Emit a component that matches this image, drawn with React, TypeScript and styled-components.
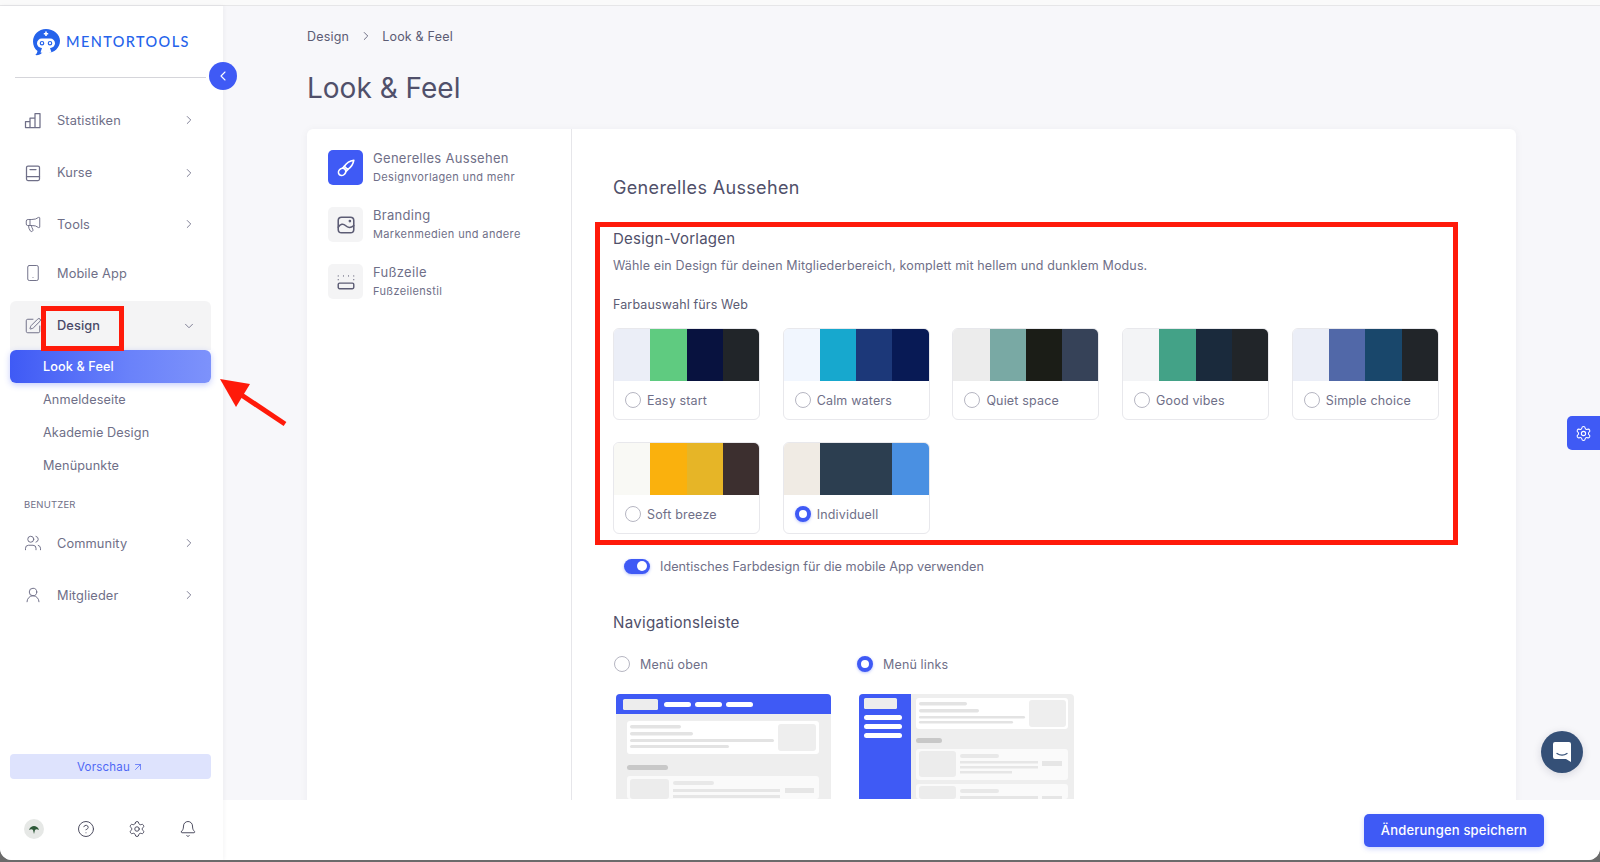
import React from "react";
import styled, { createGlobalStyle } from "styled-components";
import {
  Megaphone, Smartphone, SquarePen, ChevronRight, ChevronDown, ChevronLeft,
  Users, UserRound, HelpCircle, Settings, Bell, ArrowUpRight,
} from "lucide-react";

const Global = createGlobalStyle`
  html, body { margin: 0; padding: 0; height: 100%; background: #fff; }
  body { font-family: "Inter", "Liberation Sans", sans-serif; overflow: hidden; }
  * { box-sizing: border-box; }
`;

const Page = styled.div`
  width: 1600px; height: 862px; background: #6b6b6b; overflow: hidden; position: relative;
`;
const Shell = styled.div`
  height: 860px; background: #fff; border-radius: 0 0 12px 12px; overflow: hidden;
  display: flex; flex-direction: column;
`;
const TopStrip = styled.div`
  height: 6px; flex: none; background: #fafafa; border-bottom: 1px solid #e6e6e8;
`;
const Body = styled.div`
  flex: 1; display: flex; min-height: 0; position: relative;
`;
const Sidebar = styled.aside`
  width: 223px; flex: none; background: #fff; display: flex; flex-direction: column;
  padding: 0 12px 0 10px; box-shadow: 1px 0 4px rgba(30,30,60,.05); position: relative; z-index: 2;
`;
const LogoRow = styled.div`
  height: 71px; flex: none; display: flex; align-items: center; gap: 6px; padding: 0 0 0 22px;
`;
const LogoText = styled.span`
  font-family: "Lato", sans-serif; font-size: 14.5px; font-weight: 500; letter-spacing: 1.4px; color: #2563eb;
`;
const Rule = styled.div`
  height: 1px; background: #d5d5da; margin: 0 5px 0 5px; flex: none;
`;
const CollapseBtn = styled.button`
  position: absolute; left: 209px; top: 56px; width: 28px; height: 28px; border-radius: 50%;
  border: none; background: #3f5af5; color: #fff; display: flex; align-items: center; justify-content: center; padding: 0;
`;
const Nav = styled.nav`
  display: flex; flex-direction: column; margin-top: 16px; flex: 1;
`;
const NavItem = styled.div<{ $h?: number; $open?: boolean }>`
  height: ${(p) => p.$h ?? 52}px; flex: none; display: flex; align-items: center; padding: 0 15px 0 14px;
  margin-top: ${(p) => (p.$open ? 4 : 0)}px;
  border-radius: ${(p) => (p.$open ? "6px 6px 0 0" : "6px")};
  background: ${(p) => (p.$open ? "#f4f4f5" : "transparent")};
  color: ${(p) => (p.$open ? "#4a4a68" : "#6f6f88")};
  font-size: 12.8px; letter-spacing: .1px; font-weight: ${(p) => (p.$open ? 500 : 400)};
  svg { flex: none; }
`;
const NavLabel = styled.span`
  flex: 1; margin-left: 15px;
`;
const SubActive = styled.div`
  height: 33px; flex: none; display: flex; align-items: center; padding-left: 33px; color: #fff; font-size: 12.7px;
  letter-spacing: .1px; font-weight: 500; border-radius: 6px;
  background: linear-gradient(90deg, #3f5af5 0%, #6a82fa 60%, #7d92fb 100%);
  box-shadow: 0 2px 6px rgba(63,90,245,.3);
`;
const SubItem = styled.div`
  height: 33px; flex: none; display: flex; align-items: center; padding-left: 33px; color: #6f6f88; font-size: 12.7px; letter-spacing: .1px;
`;
const SectionLabel = styled.div`
  font-size: 9.5px; color: #6f6f88; letter-spacing: .2px; padding: 17px 0 0 14px; height: 35px; flex: none;
`;
const Preview = styled.div`
  height: 25px; flex: none; border-radius: 4px; background: #dee3fd; color: #4f68f5; font-size: 11.5px;
  display: flex; align-items: center; justify-content: center; gap: 2px; letter-spacing: .2px; margin-bottom: 32px;
`;
const BottomIcons = styled.div`
  height: 36px; flex: none; display: flex; align-items: center; padding-left: 14px; gap: 33px; margin-bottom: 13px; color: #4a4a5e;
`;
const Avatar = styled.div`
  width: 20px; height: 20px; border-radius: 50%; background: #e6e8e6; display: flex; align-items: center; justify-content: center;
`;
const Main = styled.main`
  flex: 1; min-width: 0; display: flex; flex-direction: column; position: relative;
`;
const Content = styled.div`
  flex: 1; min-height: 0; background: #f7f7fa; overflow: hidden; padding: 0 84px 0 84px;
`;
const Crumbs = styled.div`
  display: flex; align-items: center; height: 20px; margin-top: 20px; color: #5c5c74; font-size: 12.5px; gap: 9.5px; letter-spacing: .2px;
`;
const Title = styled.h1`
  margin: 22px 0 0; font-size: 28px; line-height: 40px; font-weight: 400; color: #50506a; letter-spacing: 0;
`;
const Card = styled.div`
  margin-top: 21px; background: #fff; border-radius: 6px 6px 0 0; display: flex; height: 700px;
  box-shadow: 0 1px 8px rgba(30,30,60,.05);
`;
const Tabs = styled.div`
  width: 265px; flex: none; border-right: 1px solid #e6e6ea; padding: 21px 0 0 21px; display: flex; flex-direction: column; gap: 22px;
`;
const Tab = styled.div`
  display: flex; gap: 10px; height: 35px; align-items: center;
`;
const TabIcon = styled.div<{ $active?: boolean }>`
  width: 35px; height: 35px; border-radius: 5px; flex: none; display: flex; align-items: center; justify-content: center;
  background: ${(p) => (p.$active ? "#3f5af5" : "#f4f4f5")}; color: ${(p) => (p.$active ? "#fff" : "#5c5c74")};
`;
const TabText = styled.div`
  display: flex; flex-direction: column; gap: 3px; color: #6f6f88;
`;
const TabTitle = styled.div`
  font-size: 13px; line-height: 17px; letter-spacing: .3px;
`;
const TabSub = styled.div`
  font-size: 11px; line-height: 15px; letter-spacing: .35px;
`;
const Panel = styled.div`
  flex: 1; min-width: 0; padding: 47px 0 0 34px;
`;
const PanelTitle = styled.h2`
  margin: 0 0 0 7px; font-size: 18px; line-height: 24px; font-weight: 400; color: #50506a; letter-spacing: .35px;
`;
const Highlight = styled.section`
  width: 863px; height: 323px; margin: 22px 0 0 -11px; border: 5px solid #ff1a0a; padding: 1px 0 0 13px;
`;
const SectionTitle = styled.h3`
  margin: 0; font-size: 15px; line-height: 22px; font-weight: 400; color: #50506a; letter-spacing: .25px;
`;
const Desc = styled.p`
  margin: 6px 0 0; font-size: 12.5px; line-height: 20px; color: #6f6f88; letter-spacing: .14px;
`;
const SubHead = styled.div`
  margin-top: 19px; font-size: 12.5px; line-height: 20px; color: #5c5c74; letter-spacing: .13px;
`;
const ThemeGrid = styled.div`
  display: grid; grid-template-columns: repeat(5, 147px); column-gap: 22.7px; row-gap: 22px; margin-top: 13px;
`;
const ThemeCard = styled.div`
  height: 92px; border: 1px solid #e8e8ec; border-radius: 6px; overflow: hidden; display: flex; flex-direction: column;
`;
const Swatches = styled.div`
  height: 52px; flex: none; display: flex;
`;
const Swatch = styled.div<{ $c: string }>`
  flex: 1; background: ${(p) => p.$c};
`;
const ThemeFoot = styled.div`
  flex: 1; display: flex; align-items: center; padding-left: 11px; gap: 6px; color: #6f6f88; font-size: 12.5px; letter-spacing: .17px;
`;
const Radio = styled.span<{ $on?: boolean }>`
  width: 16px; height: 16px; border-radius: 50%; flex: none; display: inline-block; background: #fff;
  border: ${(p) => (p.$on ? "4.5px solid #3f5af5" : "1px solid #b6b6c2")};
  ${(p) => (p.$on ? "box-shadow: 0 1px 3px rgba(63,90,245,.35);" : "")}
`;
const ToggleRow = styled.div`
  display: flex; align-items: center; gap: 10px; margin: 12px 0 0 18px; height: 18px; color: #6f6f88; font-size: 12.7px; letter-spacing: 0;
`;
const Toggle = styled.span`
  width: 26px; height: 15px; border-radius: 8px; background: #3f5af5; display: flex; justify-content: flex-end; align-items: center; padding-right: 3px;
  box-shadow: 0 1px 3px rgba(63,90,245,.4);
`;
const Knob = styled.span`
  width: 10px; height: 10px; border-radius: 50%; background: #fff;
`;
const NavTitle = styled.h3`
  margin: 37px 0 0 7px; font-size: 15.2px; line-height: 22px; font-weight: 400; color: #50506a; letter-spacing: .25px;
`;
const Layouts = styled.div`
  display: grid; grid-template-columns: 243px 216px; margin: 21px 0 0 8px;
`;
const LayoutOpt = styled.div`
  display: flex; flex-direction: column;
`;
const RadioLabel = styled.label`
  display: flex; align-items: center; gap: 10px; height: 18px; color: #6f6f88; font-size: 12.5px; letter-spacing: .15px;
`;
const Thumb = styled.svg`
  display: block; margin: 20px 0 0 2px;
`;
const Footer = styled.footer`
  height: 60px; flex: none; background: #fff; display: flex; align-items: center; justify-content: flex-end; padding: 0 56px 0 0;
`;
const SaveBtn = styled.button`
  width: 180px; height: 33px; border: none; border-radius: 5px; background: #3f5af5; color: #fff; font-family: inherit; font-size: 13px;
  font-weight: 500; letter-spacing: .2px; box-shadow: 0 2px 5px rgba(63,90,245,.25); padding: 0;
`;
const GearTab = styled.div`
  position: absolute; right: 0; top: 410px; width: 33px; height: 34px; background: #3f5af5; border-radius: 5px 0 0 5px; color: #fff;
  display: flex; align-items: center; justify-content: center; z-index: 3;
`;
const ChatBubble = styled.div`
  position: absolute; right: 17px; top: 725px; width: 42px; height: 42px; border-radius: 50%; background: #355077; display: flex;
  align-items: center; justify-content: center; box-shadow: 0 2px 8px rgba(30,30,60,.15); z-index: 3;
`;
const RedBox = styled.div`
  position: absolute; left: 41px; top: 300px; width: 83px; height: 45px; border: 5px solid #ff1a0a; z-index: 4;
`;
const Arrow = styled.svg`
  position: absolute; left: 215px; top: 372px; z-index: 4;
`;

const Chev = () => <ChevronRight size={14} strokeWidth={1.5} color="#6f6f88" />;

const iconProps = { width: 18, height: 18, viewBox: "0 0 18 18", fill: "none", stroke: "currentColor", strokeWidth: 1.25, strokeLinejoin: "round" as const, strokeLinecap: "round" as const };

const BarsIcon = () => (
  <svg {...iconProps}><path d="M1.5 10.5h4.5v6H1.5zM6 7h5v9.5H6zM11 2.5h5v14h-5z" /></svg>
);
const BookIcon = () => (
  <svg {...iconProps}><rect x="2.5" y="2" width="13" height="14.5" rx="1.5" /><path d="M2.5 12.5h13M6 5.5h6" /></svg>
);
const BrushIcon = () => (
  <svg {...iconProps} strokeWidth={1.5} width={20} height={20}>
    <path d="M16 2c-3.5.5-6.5 2.5-8.5 5.5l3 3c3-2 5-5 5.5-8.5Z" />
    <path d="M7.5 7.5 5.8 9.2M10.5 10.5l-1.700 1.700" />
    <ellipse cx="5.5" cy="12.5" rx="3.5" ry="3" transform="rotate(-45 5.5 12.5)" />
  </svg>
);
const PictureIcon = () => (
  <svg {...iconProps} strokeWidth={1.4} width={20} height={20}>
    <rect x="2" y="2" width="14" height="14" rx="3" />
    <path d="M2 11c2-3 4.5-3.5 6.5-1.5s4.5 2.5 7.5 0" />
    <circle cx="12.5" cy="5.5" r=".5" />
  </svg>
);
const FooterIcon = () => (
  <svg width="20" height="20" viewBox="0 0 18 18" fill="none" stroke="#5c5c74" strokeWidth="1.3">
    <path d="M2 3.5v.1M6.7 3.5v.1M11.3 3.5v.1M16 3.5v.1M2 6.8v.1M16 6.8v.1" strokeLinecap="round" strokeWidth="1" />
    <rect x="2" y="10" width="14" height="5" rx="1.2" />
  </svg>
);

function Logo() {
  return (
    <svg width="28" height="28" viewBox="0 0 28 28">
      <path d="M14 1C6.5 1 1 6.6 1 13.6c0 4 1.7 7.3 4.5 9.5-.2 1.400-1 3-2.300 4 2.700.5 5.400-.5 7-2.600 1.300.5 2.800.6 4.800.6 7.5 0 13-5.600 13-12.300C28 6.200 21.5 1 14 1Z" fill="#2563eb" />
      <rect x="5" y="10.5" width="18" height="9.5" rx="4.7" fill="#fff" />
      <path d="M10 20h8l1.500 4.500c-3 1-8 1-11 0Z" fill="#fff" />
      <path d="M13.2 3.6h1.6v1.400h1.400v1.600h-1.400V8h-1.600V6.6h-1.400V5h1.400Z" fill="#fff" />
      <circle cx="10" cy="15.2" r="1.7" fill="none" stroke="#2563eb" strokeWidth="1.2" />
      <circle cx="18" cy="15.2" r="1.7" fill="none" stroke="#2563eb" strokeWidth="1.2" />
    </svg>
  );
}

const themes = [
  { name: "Easy start", c: ["#ebeef7", "#5fcb80", "#08123f", "#212529"] },
  { name: "Calm waters", c: ["#f1f6fe", "#17a8ce", "#1c3879", "#081a55"] },
  { name: "Quiet space", c: ["#ececec", "#79a9a4", "#1b1d17", "#364258"] },
  { name: "Good vibes", c: ["#f3f4f6", "#43a287", "#1a2a3c", "#212529"] },
  { name: "Simple choice", c: ["#ebeef7", "#5168a8", "#19476b", "#212529"] },
  { name: "Soft breeze", c: ["#f9f9f5", "#fab10d", "#e6b527", "#3c2f2f"] },
  { name: "Individuell", c: ["#f0ebe4", "#2c3e50", "#2c3e50", "#4a90e2"], on: true },
];

function ThumbTop() {
  const b = "#3f5af5";
  return (
    <Thumb width="215" height="106" viewBox="0 0 215 106">
      <path d="M0 5a4 4 0 0 1 4-4h207a4 4 0 0 1 4 4v101H0Z" fill="#eeeeee" />
      <path d="M0 5a4 4 0 0 1 4-4h207a4 4 0 0 1 4 4v16H0Z" fill={b} />
      <rect x="7" y="6" width="35" height="11" rx="1.5" fill="#ededed" />
      <rect x="48" y="9" width="27" height="5" rx="2.5" fill="#fff" /><rect x="79" y="9" width="27" height="5" rx="2.5" fill="#fff" /><rect x="110" y="9" width="27" height="5" rx="2.5" fill="#fff" />
      <rect x="11" y="28" width="192" height="33" rx="3" fill="#fff" />
      <rect x="14" y="32" width="51" height="3.5" rx="1.7" fill="#e3e3e3" /><rect x="14" y="39" width="63" height="3.5" rx="1.7" fill="#e3e3e3" />
      <rect x="14" y="46" width="144" height="3" rx="1.5" fill="#e3e3e3" /><rect x="14" y="52" width="99" height="3" rx="1.5" fill="#e3e3e3" />
      <rect x="162" y="31" width="38" height="27" rx="3" fill="#eeeeee" />
      <rect x="11" y="72" width="41" height="5" rx="2.5" fill="#c8c8c8" />
      <rect x="11" y="83" width="192" height="23" rx="3" fill="#fafafa" />
      <rect x="14" y="86" width="39" height="20" rx="3" fill="#ececec" />
      <rect x="57" y="88" width="41" height="4" rx="2" fill="#e8e8e8" /><rect x="57" y="96" width="107" height="3" fill="#e6e6e6" /><rect x="57" y="102" width="107" height="3" fill="#e6e6e6" />
      <rect x="169" y="95" width="29" height="5" fill="#e6e6e6" />
    </Thumb>
  );
}
function ThumbLeft() {
  const b = "#3f5af5";
  return (
    <Thumb width="215" height="106" viewBox="0 0 215 106">
      <path d="M4 1h207a4 4 0 0 1 4 4v101H0V5a4 4 0 0 1 4-4Z" fill="#eeeeee" />
      <path d="M4 1h48v105H0V5a4 4 0 0 1 4-4Z" fill={b} />
      <rect x="5" y="5" width="33" height="11" rx="1.5" fill="#ededed" />
      <rect x="5" y="22" width="38" height="5" rx="2.5" fill="#fff" /><rect x="5" y="31" width="38" height="5" rx="2.5" fill="#fff" /><rect x="5" y="40" width="38" height="5" rx="2.5" fill="#fff" />
      <rect x="57" y="5" width="152" height="31" rx="3" fill="#fff" />
      <rect x="60" y="9" width="48" height="3.5" rx="1.7" fill="#e3e3e3" /><rect x="60" y="16" width="60" height="3.5" rx="1.7" fill="#e3e3e3" />
      <rect x="60" y="23" width="106" height="2.5" rx="1.2" fill="#e3e3e3" /><rect x="60" y="28" width="94" height="2.5" rx="1.2" fill="#e3e3e3" />
      <rect x="170" y="7" width="37" height="27" rx="3" fill="#eeeeee" />
      <rect x="57" y="45" width="26" height="5" rx="2.5" fill="#c8c8c8" />
      <rect x="57" y="56" width="152" height="31" rx="3" fill="#fafafa" />
      <rect x="60" y="58" width="37" height="26" rx="3" fill="#ececec" />
      <rect x="101" y="61" width="39" height="4" rx="2" fill="#e8e8e8" /><rect x="101" y="68" width="78" height="2.5" fill="#e6e6e6" /><rect x="101" y="73" width="78" height="2.5" fill="#e6e6e6" /><rect x="101" y="78" width="52" height="2.5" fill="#e6e6e6" />
      <rect x="183" y="68" width="20" height="5" fill="#e6e6e6" />
      <rect x="57" y="91" width="152" height="15" rx="3" fill="#fafafa" />
      <rect x="60" y="93" width="37" height="13" rx="3" fill="#ececec" />
      <rect x="101" y="96" width="39" height="4" rx="2" fill="#e8e8e8" /><rect x="101" y="103" width="78" height="3" fill="#e6e6e6" /><rect x="183" y="103" width="20" height="3" fill="#e6e6e6" />
    </Thumb>
  );
}

export default function App() {
  return (
    <Page>
      <Global />
      <Shell>
        <TopStrip />
        <Body>
          <Sidebar>
            <LogoRow><Logo /><LogoText>MENTORTOOLS</LogoText></LogoRow>
            <Rule />
            <CollapseBtn aria-label="Einklappen"><ChevronLeft size={16} strokeWidth={1.6} /></CollapseBtn>
            <Nav>
              <NavItem><BarsIcon /><NavLabel>Statistiken</NavLabel><Chev /></NavItem>
              <NavItem $h={53}><BookIcon /><NavLabel>Kurse</NavLabel><Chev /></NavItem>
              <NavItem $h={50}><Megaphone size={18} strokeWidth={1.3} /><NavLabel>Tools</NavLabel><Chev /></NavItem>
              <NavItem $h={48}><Smartphone size={18} strokeWidth={1.3} /><NavLabel>Mobile App</NavLabel></NavItem>
              <NavItem $open $h={49}><SquarePen size={18} strokeWidth={1.3} color="#6f6f88" /><NavLabel>Design</NavLabel><ChevronDown size={14} strokeWidth={1.5} color="#6f6f88" /></NavItem>
              <SubActive>Look &amp; Feel</SubActive>
              <SubItem>Anmeldeseite</SubItem>
              <SubItem>Akademie Design</SubItem>
              <SubItem>Menüpunkte</SubItem>
              <SectionLabel>BENUTZER</SectionLabel>
              <NavItem><Users size={18} strokeWidth={1.3} /><NavLabel>Community</NavLabel><Chev /></NavItem>
              <NavItem><UserRound size={18} strokeWidth={1.3} /><NavLabel>Mitglieder</NavLabel><Chev /></NavItem>
            </Nav>
            <Preview>Vorschau <ArrowUpRight size={12} strokeWidth={1.5} /></Preview>
            <BottomIcons>
              <Avatar>
                <svg width="12" height="12" viewBox="0 0 12 12"><path d="M1 7c1-3 3-4 5-4s4 1 5 4c-2-1-3-1-4 0l-1 4-1-4c-1-1-2-1-4 0Z" fill="#2f5a3a" /></svg>
              </Avatar>
              <HelpCircle size={18} strokeWidth={1.3} />
              <Settings size={18} strokeWidth={1.3} />
              <Bell size={18} strokeWidth={1.3} />
            </BottomIcons>
          </Sidebar>
          <Main>
            <Content>
              <Crumbs>Design <ChevronRight size={14} strokeWidth={1.5} /> Look &amp; Feel</Crumbs>
              <Title>Look &amp; Feel</Title>
              <Card>
                <Tabs>
                  <Tab>
                    <TabIcon $active><BrushIcon /></TabIcon>
                    <TabText><TabTitle>Generelles Aussehen</TabTitle><TabSub>Designvorlagen und mehr</TabSub></TabText>
                  </Tab>
                  <Tab>
                    <TabIcon><PictureIcon /></TabIcon>
                    <TabText><TabTitle>Branding</TabTitle><TabSub>Markenmedien und andere</TabSub></TabText>
                  </Tab>
                  <Tab>
                    <TabIcon><FooterIcon /></TabIcon>
                    <TabText><TabTitle>Fußzeile</TabTitle><TabSub>Fußzeilenstil</TabSub></TabText>
                  </Tab>
                </Tabs>
                <Panel>
                  <PanelTitle>Generelles Aussehen</PanelTitle>
                  <Highlight>
                    <SectionTitle>Design-Vorlagen</SectionTitle>
                    <Desc>Wähle ein Design für deinen Mitgliederbereich, komplett mit hellem und dunklem Modus.</Desc>
                    <SubHead>Farbauswahl fürs Web</SubHead>
                    <ThemeGrid>
                      {themes.map((t) => (
                        <ThemeCard key={t.name}>
                          <Swatches>{t.c.map((c, i) => <Swatch key={i} $c={c} />)}</Swatches>
                          <ThemeFoot><Radio $on={t.on} />{t.name}</ThemeFoot>
                        </ThemeCard>
                      ))}
                    </ThemeGrid>
                  </Highlight>
                  <ToggleRow><Toggle><Knob /></Toggle>Identisches Farbdesign für die mobile App verwenden</ToggleRow>
                  <NavTitle>Navigationsleiste</NavTitle>
                  <Layouts>
                    <LayoutOpt><RadioLabel><Radio />Menü oben</RadioLabel><ThumbTop /></LayoutOpt>
                    <LayoutOpt><RadioLabel><Radio $on />Menü links</RadioLabel><ThumbLeft /></LayoutOpt>
                  </Layouts>
                </Panel>
              </Card>
            </Content>
            <Footer><SaveBtn>Änderungen speichern</SaveBtn></Footer>
          </Main>
          <GearTab><Settings size={17} strokeWidth={1.5} /></GearTab>
          <ChatBubble>
            <svg width="20" height="22" viewBox="0 0 20 22"><path d="M3 1h14a2 2 0 0 1 2 2v18l-5-3H3a2 2 0 0 1-2-2V3a2 2 0 0 1 2-2Z" fill="#fff" /><path d="M5 12.5c3 2 7 2 10 0" stroke="#355077" strokeWidth="1.3" fill="none" strokeLinecap="round" /></svg>
          </ChatBubble>
          <RedBox />
          <Arrow width="76" height="52" viewBox="0 0 76 52">
            <path d="M25 16 L70 46" stroke="#ff1a0a" strokeWidth="5" />
            <path d="M5 1 L35 6 L21 29 Z" fill="#ff1a0a" />
          </Arrow>
        </Body>
      </Shell>
    </Page>
  );
}
